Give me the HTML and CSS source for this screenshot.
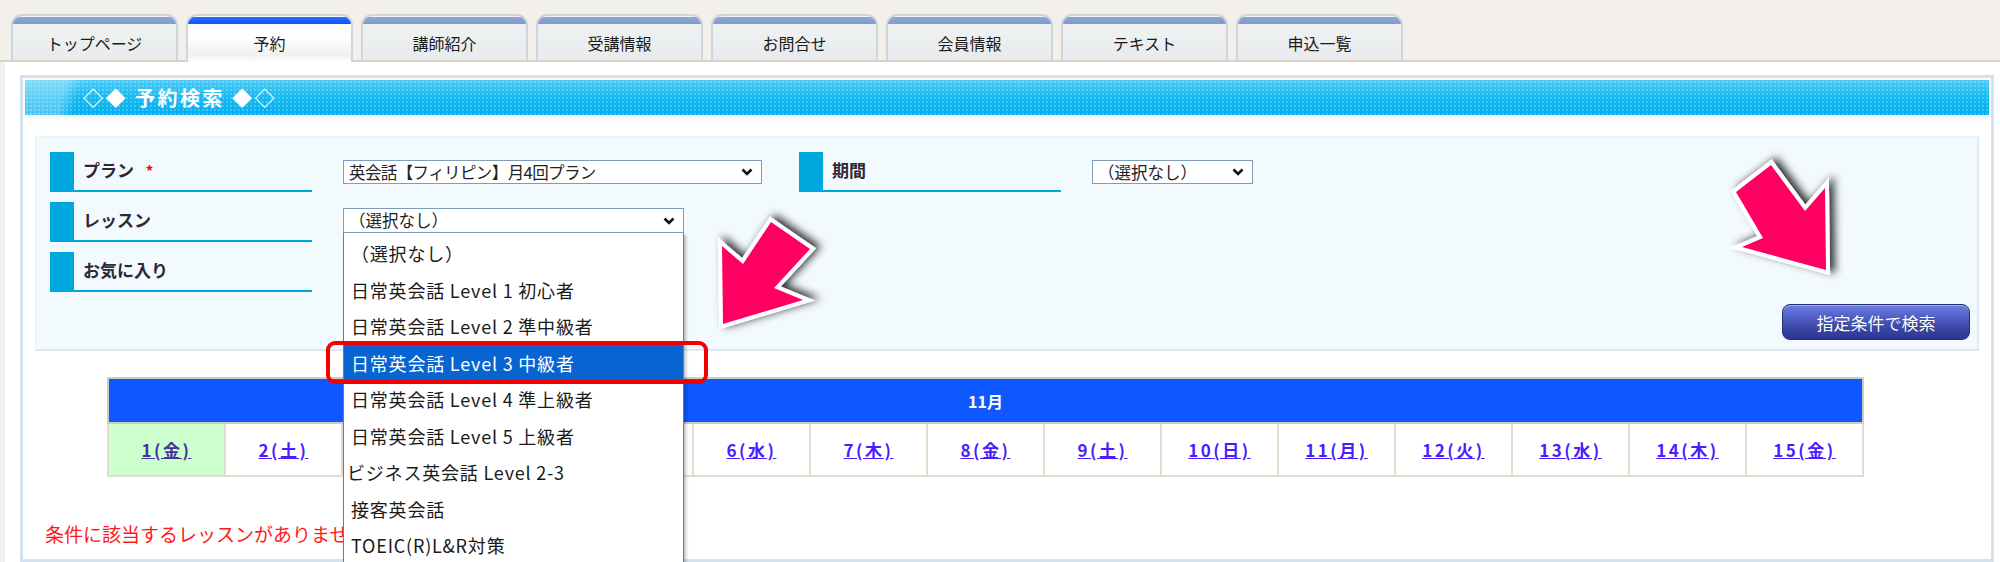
FILE: index.html
```html
<!DOCTYPE html>
<html lang="ja">
<head>
    <meta charset="UTF-8">
    <title>予約検索</title>
    <link rel="stylesheet" href="styles.css">
</head>
<body>

    <div class="tabs">
        <div class="tab">トップページ</div>
        <div class="tab active">予約</div>
        <div class="tab">講師紹介</div>
        <div class="tab">受講情報</div>
        <div class="tab">お問合せ</div>
        <div class="tab">会員情報</div>
        <div class="tab">テキスト</div>
        <div class="tab">申込一覧</div>
    </div>

    <div class="page">
        <div class="box">
            <div class="box-head">◇◆ 予約検索 ◆◇</div>

            <div class="box-body">
                <div class="search">
                    <div class="fields">
                        <div class="row">
                            <div class="label">プラン <span class="req">*</span></div>
                            <div class="sel sel-plan">
                                <span>英会話【フィリピン】月4回プラン</span>
                                <svg class="chev" viewBox="0 0 12 8"><path d="M1.5 1.5 L6 6 L10.5 1.5"/></svg>
                            </div>
                            <div class="label label-period">期間</div>
                            <div class="sel sel-period">
                                <span>（選択なし）</span>
                                <svg class="chev" viewBox="0 0 12 8"><path d="M1.5 1.5 L6 6 L10.5 1.5"/></svg>
                            </div>
                        </div>
                        <div class="row">
                            <div class="label">レッスン</div>
                            <div class="dd">
                                <div class="sel sel-lesson">
                                    <span>（選択なし）</span>
                                    <svg class="chev" viewBox="0 0 12 8"><path d="M1.5 1.5 L6 6 L10.5 1.5"/></svg>
                                </div>
                                <!-- 開いた状態のドロップダウン -->
                                <ul class="dd-list">
                                    <li>（選択なし）</li>
                                    <li>日常英会話 Level 1 初心者</li>
                                    <li>日常英会話 Level 2 準中級者</li>
                                    <li class="hl">日常英会話 Level 3 中級者</li>
                                    <li>日常英会話 Level 4 準上級者</li>
                                    <li>日常英会話 Level 5 上級者</li>
                                    <li class="tight">ビジネス英会話 Level 2-3</li>
                                    <li>接客英会話</li>
                                    <li>TOEIC(R)L&amp;R対策</li>
                                    <div class="dd-mark"></div>
                                </ul>
                            </div>
                        </div>
                        <div class="row">
                            <div class="label">お気に入り</div>
                        </div>
                    </div>
                    <button class="btn-search">指定条件で検索</button>
                </div>

                <table class="cal">
                    <tr><th colspan="15">11月</th></tr>
                    <tr>
                        <td class="today"><a href="#">1(金)</a></td>
                        <td><a href="#">2(土)</a></td>
                        <td><a href="#">3(日)</a></td>
                        <td><a href="#">4(月)</a></td>
                        <td><a href="#">5(火)</a></td>
                        <td><a href="#">6(水)</a></td>
                        <td><a href="#">7(木)</a></td>
                        <td><a href="#">8(金)</a></td>
                        <td><a href="#">9(土)</a></td>
                        <td><a href="#">10(日)</a></td>
                        <td><a href="#">11(月)</a></td>
                        <td><a href="#">12(火)</a></td>
                        <td><a href="#">13(水)</a></td>
                        <td><a href="#">14(木)</a></td>
                        <td><a href="#">15(金)</a></td>
                    </tr>
                </table>

                <p class="msg">条件に該当するレッスンがありません。</p>
            </div>
        </div>
    </div>

    <!-- 矢印の注釈 -->
    <svg class="arrow arrow-a" viewBox="700 200 140 145">
        <defs>
            <filter id="shA" x="-40%" y="-40%" width="180%" height="180%">
                <feDropShadow dx="5" dy="-2" stdDeviation="4" flood-color="#000" flood-opacity=".8"/>
            </filter>
        </defs>
        <polygon filter="url(#shA)" points="771,222 810,249 774,288 803,300 723,324 722,246 743,264"/>
    </svg>

    <svg class="arrow arrow-b" viewBox="1715 145 140 145">
        <defs>
            <filter id="shB" x="-40%" y="-40%" width="180%" height="180%">
                <feDropShadow dx="5" dy="-2" stdDeviation="4" flood-color="#000" flood-opacity=".8"/>
            </filter>
        </defs>
        <polygon filter="url(#shB)" points="1736,192 1771,165 1805,211 1825,188 1826,270 1742,247 1763,238"/>
    </svg>

</body>
</html>
```

FILE: styles.css
```css
* {
    margin: 0;
    padding: 0;
    box-sizing: border-box;
}

body {
    width: 2000px;
    height: 562px;
    overflow: hidden;
    background: #f3efeb;
    font-family: "Noto Sans CJK JP", "Noto Sans", sans-serif;
    color: #222;
}

/* タブ */
.tabs {
    display: flex;
    gap: 8px;
    height: 62px;
    padding: 14px 0 0 11px;
    border-bottom: 2px solid #dbd3c7;
}

.tab {
    width: 167px;
    height: 46px;
    padding-top: 9px;
    display: flex;
    align-items: center;
    justify-content: center;
    font-size: 16px;
    color: #1a1a1a;
    border: 2px solid #cfd6da;
    border-bottom: none;
    border-radius: 11px 11px 0 0;
    background:
        linear-gradient(#8ea6d5, #7f9ad0) 0 1px / 100% 7px no-repeat,
        linear-gradient(#f1f3f4, #e8ebed);
}

.tab.active {
    height: 48px;
    padding-bottom: 2px;
    background:
        linear-gradient(#2a6cff, #0b57ff) 0 1px / 100% 7px no-repeat,
        linear-gradient(#fafafa, #fff 45%, #f0f0f0 85%, #fff);
}

/* 本体 */
.page {
    margin-left: 5px;
    height: 500px;
    padding: 13px 6px 0 15px;
    background: #fff;
}

.box {
    height: 100%;
    border: 3px solid #d3e2ee;
    padding: 2px;
}

.box-head {
    height: 35px;
    padding-left: 58px;
    display: flex;
    align-items: center;
    font-size: 20px;
    font-weight: bold;
    letter-spacing: 2.5px;
    color: #fff;
    background:
        linear-gradient(105deg, rgba(255, 255, 255, 0.3) 0, rgba(255, 255, 255, 0.3) 40px, rgba(255, 255, 255, 0) 55px),
        radial-gradient(rgba(255, 255, 255, 0.22) 0.8px, transparent 1.2px) 0 0 / 4px 4px,
        linear-gradient(#4fcbf7, #14b9f2 50%, #00afef);
    box-shadow: 0 4px 5px rgba(0, 0, 0, 0.05);
}

.box-body {
    padding: 21px 10px 0 10px;
}

/* 検索フォーム */
.search {
    display: flex;
    justify-content: space-between;
    align-items: flex-end;
    padding: 14px 7px 9px 13px;
    background: #f3fafd;
    border: 2px solid #dde7f5;
    border-top-color: #eef5fa;
    border-left-color: #eef5fa;
}

.fields {
    display: flex;
    flex-direction: column;
    gap: 10px;
    padding-bottom: 48px;
}

.row {
    display: flex;
    align-items: flex-start;
    height: 40px;
}

.label {
    width: 262px;
    height: 40px;
    padding-left: 9px;
    line-height: 36px;
    font-size: 17px;
    font-weight: bold;
    color: #2e2735;
    border-left: 24px solid #00a7df;
    border-bottom: 2px solid #00a7df;
}

.req {
    color: #f00;
    margin-left: 8px;
    font-size: 15px;
}

.label-period {
    margin-left: 37px;
}

.sel {
    display: flex;
    align-items: center;
    justify-content: space-between;
    height: 24px;
    padding: 0 8px 0 5px;
    font-size: 16.5px;
    line-height: 1;
    white-space: nowrap;
    background: #fff;
    border: 1px solid #7f9db9;
}

.sel-plan {
    width: 419px;
    margin: 8px 0 0 31px;
}

.sel-plan span {
    letter-spacing: -0.6px;
}

.sel-period {
    width: 161px;
    margin: 8px 0 0 31px;
}

.dd {
    position: relative;
    margin: 6px 0 0 31px;
}

.sel-lesson {
    width: 341px;
    height: 25px;
}

.chev {
    width: 12px;
    height: 8px;
    fill: none;
    stroke: #111;
    stroke-width: 2.6;
}

.dd-list {
    position: absolute;
    top: 100%;
    left: 0;
    width: 341px;
    padding-top: 2px;
    list-style: none;
    background: #fff;
    border: 1px solid #7a7a7a;
    border-top: none;
    box-shadow: 2px 2px 3px rgba(0, 0, 0, 0.25);
    z-index: 5;
}

.dd-list li {
    height: 36.5px;
    line-height: 36.5px;
    padding-left: 7px;
    font-size: 18px;
    letter-spacing: 0.8px;
    color: #1a1a1a;
    white-space: nowrap;
}

.dd-list li.tight {
    padding-left: 3px;
}

.dd-list li.hl {
    background: #0864d0;
    color: #fff;
}

.dd-mark {
    position: absolute;
    left: -18px;
    top: 108px;
    width: 382px;
    height: 43px;
    border: 4px solid #f20000;
    border-radius: 9px;
}

.btn-search {
    width: 188px;
    height: 36px;
    font-family: inherit;
    font-size: 17px;
    color: #fff;
    text-shadow: 0 0 1px rgba(0, 0, 0, 0.4);
    border: 1px solid #252e78;
    border-radius: 8px;
    background: linear-gradient(#6f7ee0, #5060c8 35%, #3a46a6 70%, #2c3690);
    box-shadow: inset 0 1px 0 rgba(255, 255, 255, 0.35);
}

/* カレンダー */
.cal {
    margin: 26px 0 0 72px;
    width: 1757px;
    border-collapse: collapse;
    table-layout: fixed;
}

.cal th {
    height: 45px;
    background: #0f58ff;
    color: #fff;
    font-size: 16px;
    font-weight: bold;
    border: 2px solid #cfcac2;
}

.cal td {
    height: 53px;
    text-align: center;
    border: 2px solid #e3dccf;
    background: #fff;
}

.cal td.today {
    background: #ccffcc;
}

.cal a {
    font-size: 17px;
    font-weight: bold;
    letter-spacing: 2.5px;
    color: #4a1cff;
}

.cal td.today a {
    color: #46329c;
}

.msg {
    margin-top: 43px;
    padding-left: 10px;
    font-size: 19px;
    color: #ff1a1a;
}

/* 矢印 */
.arrow {
    position: absolute;
    width: 140px;
    height: 145px;
    overflow: visible;
}

.arrow polygon {
    fill: #ff0062;
    stroke: #fff;
    stroke-width: 8;
    stroke-linejoin: miter;
    paint-order: stroke;
}

.arrow-a {
    left: 700px;
    top: 200px;
}

.arrow-b {
    left: 1715px;
    top: 145px;
}
```
